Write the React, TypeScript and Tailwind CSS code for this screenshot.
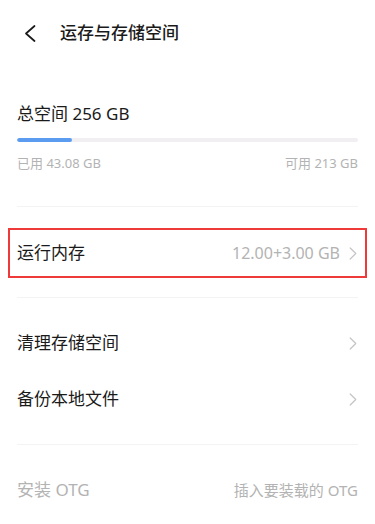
const font = { fontFamily: '"Noto Sans", "Noto Sans CJK SC", sans-serif' };

function Chevron() {
  return (
    <svg width="8" height="13" viewBox="0 0 8 13" fill="none" className="shrink-0">
      <path d="M1.2 1l5.6 5.5-5.6 5.5" stroke="#c4c4c4" strokeWidth="1.2" strokeLinecap="round" strokeLinejoin="round" />
    </svg>
  );
}

function Row({ label }: { label: string }) {
  return (
    <div className="h-[56px] pl-[17px] pr-[18px] flex items-center justify-between">
      <span className="text-[17px] text-[#1a1a1a]">{label}</span>
      <Chevron />
    </div>
  );
}

export default function App() {
  return (
    <div className="w-[375px] h-[524px] bg-white overflow-hidden" style={font}>
      {/* Header */}
      <div className="h-[66px] flex items-center pl-[24px]">
        <svg width="12" height="17" viewBox="0 0 12 17" fill="none">
          <path d="M10.5 1L2 8.5l8.5 7.5" stroke="#1a1a1a" strokeWidth="1.7" strokeLinecap="round" strokeLinejoin="round" />
        </svg>
        <span className="ml-[24px] text-[17px] text-[#1a1a1a] font-medium">运存与存储空间</span>
      </div>

      {/* Storage summary */}
      <div className="px-[17px]">
        <div className="mt-[34px] h-[28px] flex items-center text-[17px] text-[#1a1a1a]">总空间 256 GB</div>
        <div className="mt-[10px] h-[4px] rounded-full bg-[#f1eff1] overflow-hidden">
          <div className="h-full w-[55px] bg-[#5b9cf0] rounded-full" />
        </div>
        <div className="mt-[12px] h-[20px] flex items-center justify-between text-[13px] text-[#b3b3b3]">
          <span>已用 43.08 GB</span>
          <span>可用 213 GB</span>
        </div>
        <div className="mt-[32px] h-px bg-[#f3f3f3]" />
      </div>

      {/* Highlighted row */}
      <div className="mt-[21px] mx-[8px] h-[50px] border-2 border-[#ef3a3a] pl-[7px] pr-[8px] flex items-center justify-between">
        <span className="text-[17px] text-[#1a1a1a]">运行内存</span>
        <div className="flex items-center gap-[9px]">
          <span className="text-[16px] text-[#b3b3b3]">12.00+3.00 GB</span>
          <Chevron />
        </div>
      </div>

      <div className="mx-[17px] mt-[19px] h-px bg-[#f3f3f3]" />

      <div className="mt-[17px]">
        <Row label="清理存储空间" />
        <Row label="备份本地文件" />
      </div>

      <div className="mx-[17px] mt-[17px] h-px bg-[#f3f3f3]" />

      <div className="h-[56px] mt-[17px] px-[17px] flex items-center justify-between">
        <span className="text-[17px] text-[#b3b3b3]">安装 OTG</span>
        <span className="text-[15px] text-[#b3b3b3]">插入要装载的 OTG</span>
      </div>
    </div>
  );
}
